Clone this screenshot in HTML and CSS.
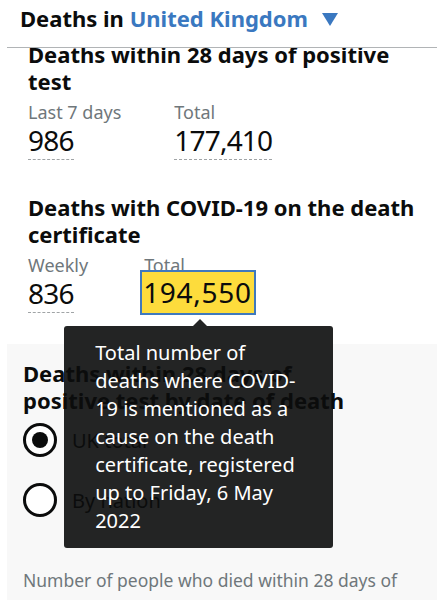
FILE: index.html
```html
<!DOCTYPE html>
<html lang="en">
<head>
<meta charset="utf-8">
<link rel="stylesheet" href="styles.css">
</head>
<body>
<header class="top">
  <h1 class="top-title">Deaths in <span class="place">United Kingdom <span class="caret"></span></span></h1>
</header>
<div class="viewport">
  <div class="content">
    <section class="block">
      <h2 class="block-title">Deaths within 28 days of positive test</h2>
      <div class="stats">
        <div class="stat stat-first">
          <div class="stat-label">Last 7 days</div>
          <div class="stat-value">986</div>
        </div>
        <div class="stat">
          <div class="stat-label">Total</div>
          <div class="stat-value">177,410</div>
        </div>
      </div>
    </section>
    <section class="block">
      <h2 class="block-title">Deaths with COVID-19 on the death certificate</h2>
      <div class="stats">
        <div class="stat stat-weekly">
          <div class="stat-label">Weekly</div>
          <div class="stat-value">836</div>
        </div>
        <div class="stat stat-tip">
          <div class="stat-label">Total</div>
          <div class="stat-value focused">194,550</div>
          <div class="tooltip">Total number of<br>deaths where COVID-<br>19 is mentioned as a<br>cause on the death<br>certificate, registered<br>up to Friday, 6 May<br>2022</div>
        </div>
      </div>
    </section>
    <section class="panel">
      <h2 class="panel-title">Deaths within 28 days of positive test by date of death</h2>
      <div class="radios">
        <label class="radio"><span class="radio-dot checked"></span><span class="radio-text">UK total</span></label>
        <label class="radio"><span class="radio-dot"></span><span class="radio-text">By nation</span></label>
      </div>
      <p class="panel-note">Number of people who died within 28 days of</p>
    </section>
  </div>
</div>
</body>
</html>
```

FILE: styles.css
```css
* { box-sizing: border-box; }
html, body { margin: 0; padding: 0; background: #fff; }
body {
  width: 444px;
  height: 600px;
  overflow: hidden;
  font-family: "Noto Sans", "Liberation Sans", sans-serif;
  color: #0b0c0c;
}
.top {
  height: 48px;
  padding: 3px 0 0 13px;
  border-bottom: 1px solid #b1b4b6;
  margin: 0 7px;
}
.top-title {
  margin: 0;
  font-size: 22px;
  line-height: 30px;
  font-weight: 700;
}
.place { color: #3a78c0; }
.caret {
  display: inline-block;
  width: 0; height: 0;
  border-left: 8.5px solid transparent;
  border-right: 8.5px solid transparent;
  border-top: 13px solid #3a78c0;
  margin-left: 8px;
  vertical-align: 1px;
}
.viewport {
  height: 552px;
  overflow: hidden;
}
.content {
  margin-top: -7px;
}
.block {
  padding: 0 20px 0 28px;
}
.block-title {
  margin: 0;
  font-size: 22px;
  line-height: 27px;
  font-weight: 700;
}
.stats {
  display: flex;
  margin-top: 6px;
  margin-bottom: 34px;
}
.stat-first { margin-right: 53px; }
.stat-weekly { margin-right: 56px; }
.stat-tip { position: relative; }
.stat-label {
  font-size: 18px;
  line-height: 22px;
  color: #6f777b;
}
.stat-value {
  display: inline-block;
  font-size: 28px;
  line-height: 35px;
  letter-spacing: -0.8px;
  padding-bottom: 1px;
  border-bottom: 1px dashed #a0a4a6;
}
.focused {
  position: relative;
  z-index: 2;
  background: #fddc3c;
  border: 2px solid #3f79bd;
  margin: -6px 0 -3px -4px;
  padding: 0 2px 0 1px;
  height: 45px;
  line-height: 41px;
  letter-spacing: 0.7px;
}
.tooltip {
  position: absolute;
  left: -80px;
  top: 72px;
  width: 269px;
  padding: 13px 20px 13px 31px;
  background: rgba(11, 12, 12, 0.9);
  color: #fff;
  font-size: 20px;
  line-height: 28px;
  border-radius: 3px;
  z-index: 5;
}
.tooltip::before {
  content: "";
  position: absolute;
  left: 129px;
  top: -7px;
  border-left: 7px solid transparent;
  border-right: 7px solid transparent;
  border-bottom: 7px solid rgba(11, 12, 12, 0.9);
}
.panel {
  margin: -3px 7px 0 7px;
  background: #f8f8f8;
  padding: 16px 16px 0 16px;
  height: 270px;
}
.panel-title {
  margin: 0;
  max-width: 345px;
  font-size: 22px;
  line-height: 27px;
  font-weight: 700;
}
.radios {
  display: flex;
  flex-direction: column;
  gap: 26px;
  margin-top: 9px;
}
.radio {
  display: flex;
  align-items: center;
  gap: 15px;
  height: 34px;
}
.radio-dot {
  flex: none;
  width: 34px;
  height: 34px;
  border: 3px solid #0b0c0c;
  border-radius: 50%;
  display: flex;
  align-items: center;
  justify-content: center;
  background: #fff;
}
.radio-dot.checked::after {
  content: "";
  width: 16px;
  height: 16px;
  border-radius: 50%;
  background: #0b0c0c;
}
.radio-text {
  font-size: 20px;
  color: #0b0c0c;
}
.panel-note {
  margin: 50px 0 0 0;
  white-space: nowrap;
  font-size: 17.5px;
  line-height: 26px;
  color: #6f777b;
}
```
